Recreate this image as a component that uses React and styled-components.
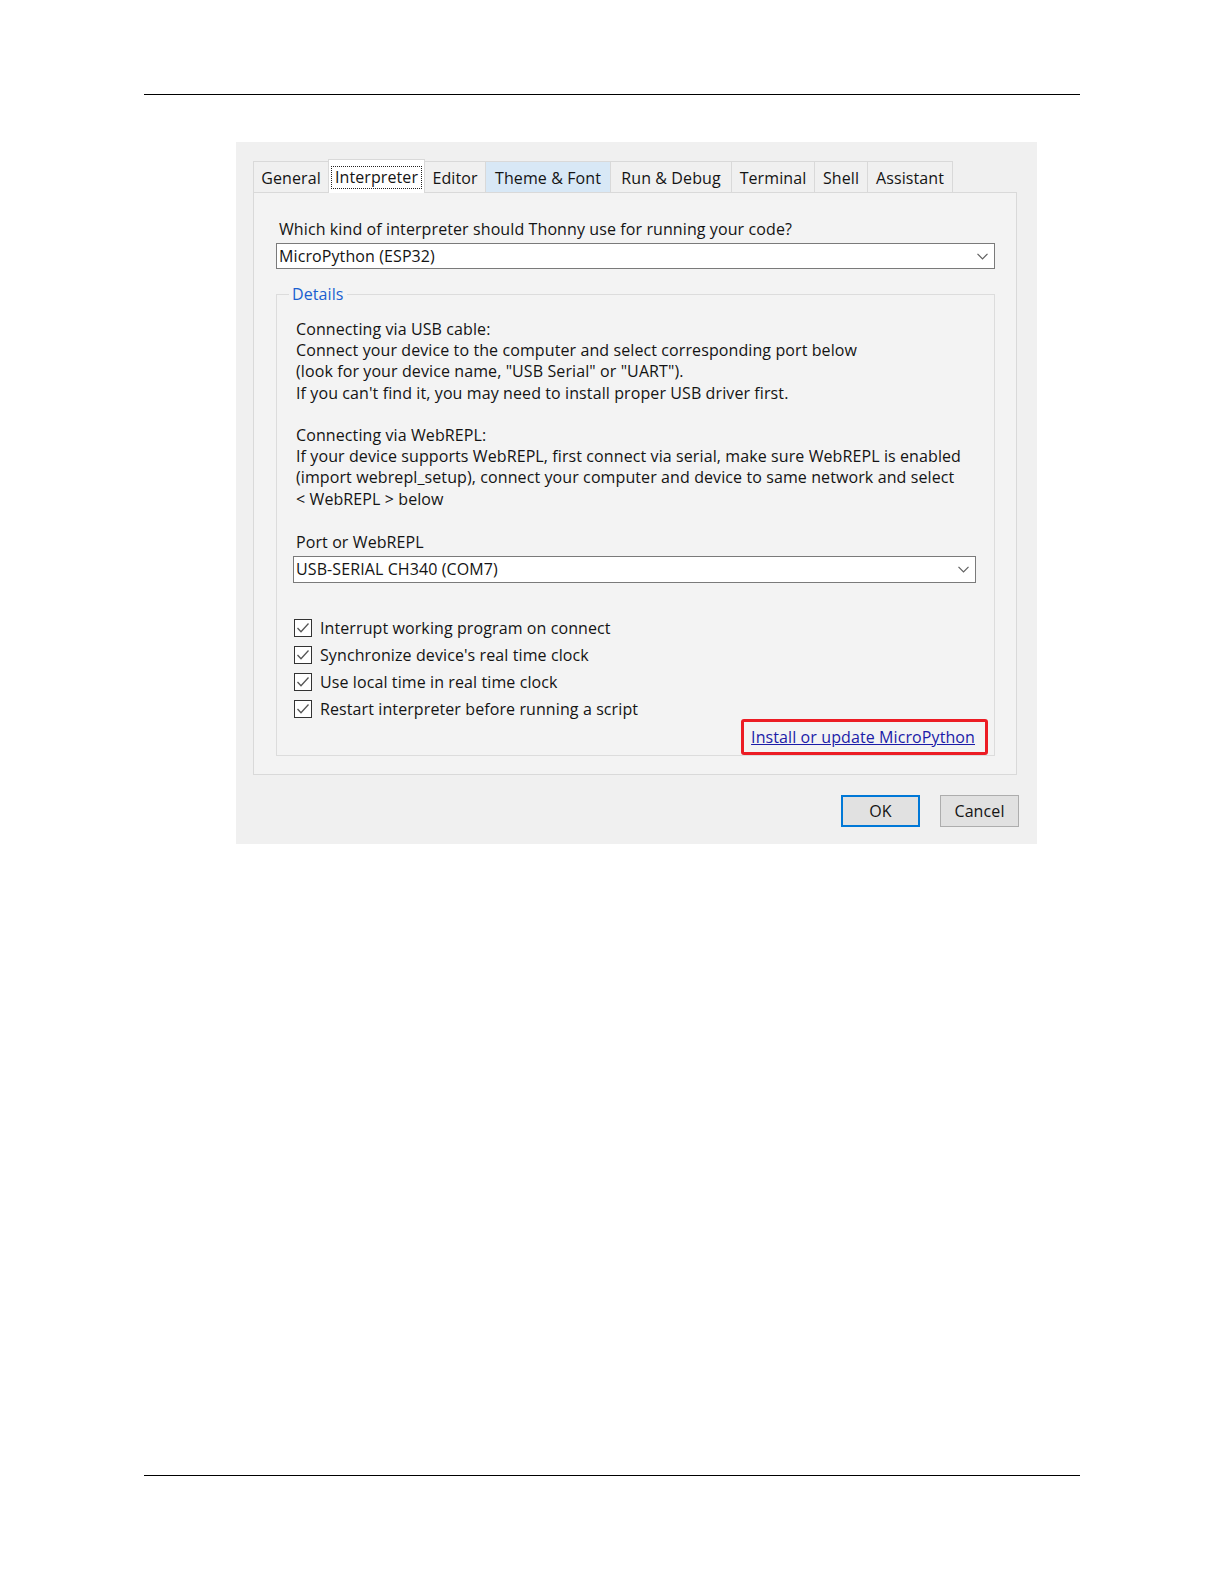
import React from 'react';
import styled, { createGlobalStyle } from 'styled-components';

const Global = createGlobalStyle`
  html, body {
    margin: 0;
    padding: 0;
    background: #ffffff;
  }
  body {
    font-family: "Open Sans", "Noto Sans", sans-serif;
    color: #141414;
  }
`;

const Page = styled.div`
  width: 1224px;
  height: 1584px;
  display: flex;
  flex-direction: column;
  padding: 94px 0 108px;
  box-sizing: border-box;
`;

const Rule = styled.div`
  margin: ${p => (p.bottom ? 'auto 144px 0' : '0 144px')};
  border-top: 1px solid #000;
`;

const Dialog = styled.div`
  margin: 47px 0 0 236px;
  width: 801px;
  background: #f0f0f0;
  padding: 17px 18px 17px 17px;
  box-sizing: border-box;
  font-size: 16px;
  letter-spacing: 0.1px;
`;

const Notebook = styled.div`
  width: 764px;
`;

const TabBar = styled.div`
  display: flex;
  align-items: flex-end;
  height: 33px;
`;

const Tab = styled.div`
  width: ${p => p.w}px;
  height: ${p => (p.selected ? '34px' : '31px')};
  margin-bottom: ${p => (p.selected ? '-1px' : '0')};
  padding-top: 1px;
  box-sizing: border-box;
  display: flex;
  align-items: center;
  justify-content: center;
  white-space: nowrap;
  border: 1px solid #d9d9d9;
  border-bottom: none;
  margin-left: -1px;
  background: ${p => (p.selected ? '#ffffff' : p.hover ? '#d8e8f6' : '#f0f0f0')};
  position: relative;
  z-index: ${p => (p.selected ? 2 : 1)};
  &:first-child { margin-left: 0; }
`;

const Focus = styled.span`
  outline: 1px dotted #222;
  outline-offset: 0;
  padding: 0 3px;
  line-height: 21px;
`;

const Pane = styled.div`
  border: 1px solid #d9d9d9;
  background: #f3f3f3;
  padding: 26px 21px 18px 22px;
`;

const Label = styled.div`
  line-height: 21px;
  margin-bottom: ${p => p.gap}px;
  padding-left: 3px;
`;

const Combo = styled.div`
  height: ${p => p.h}px;
  box-sizing: border-box;
  border: 1px solid #7a7a7a;
  background: #fff;
  display: flex;
  align-items: center;
  padding: 0 6px 0 2px;
  margin-right: ${p => p.mr || 0}px;
`;

const ComboValue = styled.span`
  flex: 1;
  line-height: 21px;
`;

const Frame = styled.fieldset`
  margin: 15px 0 0;
  padding: 0 0 0 16px;
  border: 1px solid #dcdcdc;
  min-width: 0;
`;

const Legend = styled.legend`
  margin-left: -4px;
  padding: 0 3px;
  line-height: 21px;
  color: #1a5fd0;
`;

const Info = styled.div`
  margin: 14px 0 22px;
  padding-left: 3px;
  line-height: 21.2px;
  white-space: pre-line;
`;

const CheckList = styled.div`
  margin-top: 32px;
  display: flex;
  flex-direction: column;
`;

const CheckRow = styled.div`
  height: 27px;
  display: flex;
  align-items: center;
  gap: 8px;
  padding-left: 1px;
`;

const Box = styled.span`
  width: 18px;
  height: 18px;
  box-sizing: border-box;
  border: 1px solid #333;
  background: #fff;
  display: flex;
  align-items: center;
  justify-content: center;
`;

const LinkRow = styled.div`
  display: flex;
  justify-content: flex-end;
  margin: -4px 6px 0 0;
`;

const Highlight = styled.div`
  border: 3px solid #ec1c24;
  border-radius: 3px;
  padding: 3px 10px 3px 7px;
  line-height: 24px;
`;

const Link = styled.a`
  color: #1c1ca8;
  text-decoration: underline;
  cursor: pointer;
`;

const ButtonRow = styled.div`
  display: flex;
  justify-content: flex-end;
  gap: 20px;
  margin-top: 20px;
`;

const Button = styled.button`
  width: 79px;
  height: 32px;
  box-sizing: border-box;
  font: inherit;
  letter-spacing: inherit;
  color: #141414;
  background: #e1e1e1;
  border: ${p => (p.primary ? '2px solid #0078d7' : '1px solid #adadad')};
  padding: 0;
`;

const Chevron = () => (
  <svg width="11" height="7" viewBox="0 0 11 7">
    <polyline points="0.5,0.8 5.5,5.8 10.5,0.8" fill="none" stroke="#606060" strokeWidth="1.2" />
  </svg>
);

const Check = () => (
  <svg width="14" height="12" viewBox="0 0 14 12">
    <polyline points="1.5,6 5,9.8 12.5,1.5" fill="none" stroke="#555" strokeWidth="1.3" />
  </svg>
);

const tabs = [
  { name: 'General', w: 76 },
  { name: 'Interpreter', w: 97, selected: true },
  { name: 'Editor', w: 62 },
  { name: 'Theme & Font', w: 126, hover: true },
  { name: 'Run & Debug', w: 122 },
  { name: 'Terminal', w: 84 },
  { name: 'Shell', w: 54 },
  { name: 'Assistant', w: 86 },
];

const options = [
  'Interrupt working program on connect',
  "Synchronize device's real time clock",
  'Use local time in real time clock',
  'Restart interpreter before running a script',
];

const info = `Connecting via USB cable:
Connect your device to the computer and select corresponding port below
(look for your device name, "USB Serial" or "UART").
If you can't find it, you may need to install proper USB driver first.

Connecting via WebREPL:
If your device supports WebREPL, first connect via serial, make sure WebREPL is enabled
(import webrepl_setup), connect your computer and device to same network and select
< WebREPL > below`;

export default function App() {
  return (
    <>
      <Global />
      <Page>
        <Rule />
        <Dialog>
          <Notebook>
            <TabBar>
              {tabs.map(t => (
                <Tab key={t.name} w={t.w} selected={t.selected} hover={t.hover}>
                  {t.selected ? <Focus>{t.name}</Focus> : t.name}
                </Tab>
              ))}
            </TabBar>
            <Pane>
              <Label gap={3}>Which kind of interpreter should Thonny use for running your code?</Label>
              <Combo h={26}>
                <ComboValue>MicroPython (ESP32)</ComboValue>
                <Chevron />
              </Combo>
              <Frame>
                <Legend>Details</Legend>
                <Info>{info}</Info>
                <Label gap={3}>Port or WebREPL</Label>
                <Combo h={27} mr={18}>
                  <ComboValue>USB-SERIAL CH340 (COM7)</ComboValue>
                  <Chevron />
                </Combo>
                <CheckList>
                  {options.map(o => (
                    <CheckRow key={o}>
                      <Box><Check /></Box>
                      {o}
                    </CheckRow>
                  ))}
                </CheckList>
                <LinkRow>
                  <Highlight>
                    <Link>Install or update MicroPython</Link>
                  </Highlight>
                </LinkRow>
              </Frame>
            </Pane>
          </Notebook>
          <ButtonRow>
            <Button primary>OK</Button>
            <Button>Cancel</Button>
          </ButtonRow>
        </Dialog>
        <Rule bottom />
      </Page>
    </>
  );
}
